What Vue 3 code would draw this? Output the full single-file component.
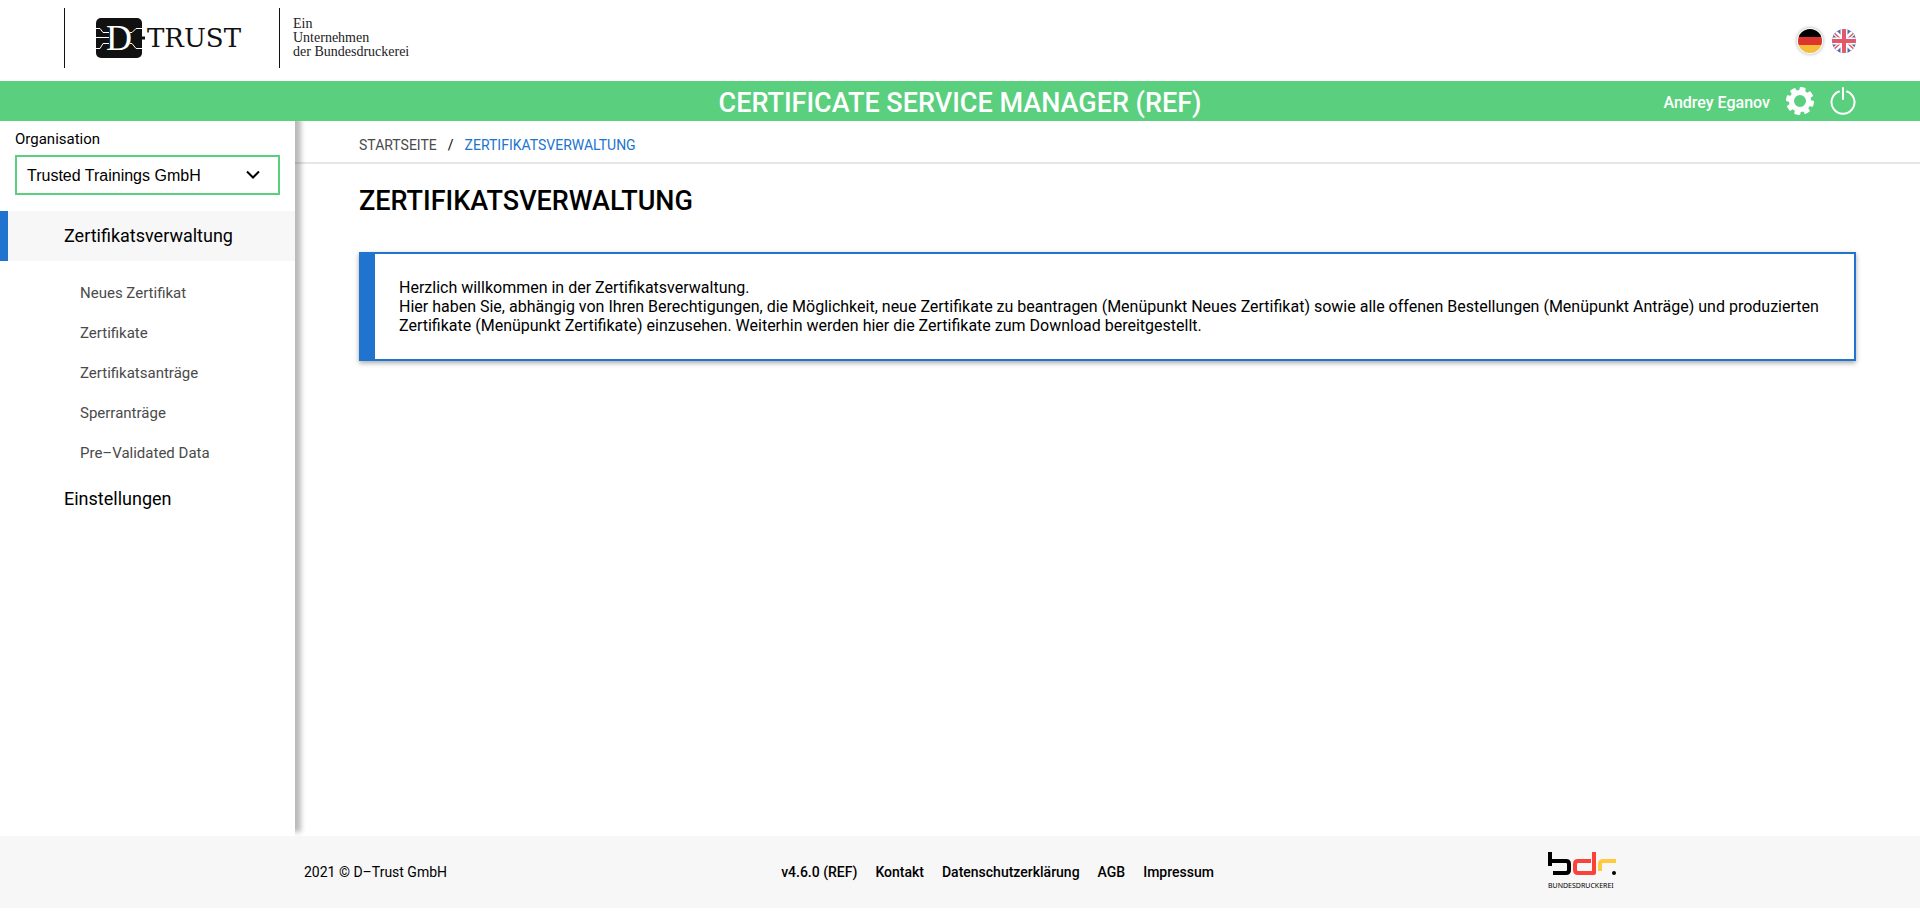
<script setup>
import { ref } from 'vue'

const organisation = ref('Trusted Trainings GmbH')
const subItems = ['Neues Zertifikat', 'Zertifikate', 'Zertifikatsanträge', 'Sperranträge', 'Pre–Validated Data']
const footerLinks = ['Kontakt', 'Datenschutzerklärung', 'AGB', 'Impressum']
const teeth = [0, 45, 90, 135, 180, 225, 270, 315]
</script>

<template>
  <div class="page">
    <header class="top">
      <a class="brand" href="#" aria-label="D-Trust">
        <svg class="brand-logo" width="152" height="42" viewBox="0 0 152 42" aria-hidden="true">
          <rect x="0" y="1" width="46" height="40" rx="5" fill="#111" />
          <g fill="none" stroke="#fff" stroke-width="1">
            <path d="M0 11.500H4L7 15.500H13M0 20.500H13M0 31.500H4L7 26.500H13" />
            <path d="M34 15.500H36L40 11.500H46M34 26.500H36L40 31.500H46" />
          </g>
          <path d="M36 21H49" stroke="#111" stroke-width="3" />
          <text x="10" y="33" class="logo-d">D</text>
          <text x="51" y="30" class="logo-word">TRUST</text>
        </svg>
        <span class="claim">Ein<br />Unternehmen<br />der Bundesdruckerei</span>
      </a>
      <div class="languages">
        <button class="flag current" type="button" aria-label="Deutsch">
          <svg width="24" height="24" viewBox="0 0 24 24">
            <clipPath id="round-de"><circle cx="12" cy="12" r="12" /></clipPath>
            <g clip-path="url(#round-de)">
              <path d="M0 0H24V8H0Z" fill="#000" />
              <path d="M0 8H24V16H0Z" fill="#dd352e" />
              <path d="M0 16H24V24H0Z" fill="#f5bd3a" />
            </g>
          </svg>
        </button>
        <button class="flag" type="button" aria-label="English">
          <svg width="24" height="24" viewBox="0 0 24 24">
            <clipPath id="round-uk"><circle cx="12" cy="12" r="12" /></clipPath>
            <g clip-path="url(#round-uk)">
              <path d="M0 0H24V24H0Z" fill="#5568ab" />
              <path d="M0 1L12 12L24 1M24 23L12 12L0 23" stroke="#fff" stroke-width="5" fill="none" />
              <path d="M0 2L12 13M24 2L12 13M24 22L12 11M0 22L12 11" stroke="#e25a6a" stroke-width="1.500" />
              <path d="M12 0V24M0 12H24" stroke="#fff" stroke-width="7" />
              <path d="M12 0V24M0 12H24" stroke="#e25a6a" stroke-width="4" />
            </g>
          </svg>
        </button>
      </div>
    </header>

    <div class="bar">
      <span class="bar-title">CERTIFICATE SERVICE MANAGER (REF)</span>
      <div class="account">
        <span class="user">Andrey Eganov</span>
        <button class="icon" type="button" aria-label="Einstellungen">
          <svg width="28" height="28" viewBox="0 0 28 28">
            <g fill="#fff">
              <rect v-for="a in teeth" :key="a" x="11" y="0" width="6" height="7" rx="1" :transform="`rotate(${a + 12} 14 14)`" />
            </g>
            <circle cx="14" cy="14" r="8.500" fill="none" stroke="#fff" stroke-width="5" />
          </svg>
        </button>
        <button class="icon" type="button" aria-label="Abmelden">
          <svg width="26" height="28" viewBox="0 0 26 28" fill="none" stroke="#fff" stroke-width="2" stroke-linecap="round">
            <path d="M9 4.500A11.500 11.500 0 1 0 17 4.500M13 1V12" />
          </svg>
        </button>
      </div>
    </div>

    <div class="body">
      <aside class="side">
        <div class="org">
          <label for="organisation">Organisation</label>
          <div class="select">
            <select id="organisation" v-model="organisation">
              <option>Trusted Trainings GmbH</option>
            </select>
            <svg class="chevron" width="14" height="10" viewBox="0 0 14 10" fill="none" stroke="#000" stroke-width="2">
              <path d="M1 1.500L7 7.500L13 1.500" />
            </svg>
          </div>
        </div>
        <nav class="menu">
          <a class="main-item active" href="#">Zertifikatsverwaltung</a>
          <div class="sub">
            <a v-for="item in subItems" :key="item" href="#">{{ item }}</a>
          </div>
          <a class="main-item" href="#">Einstellungen</a>
        </nav>
      </aside>

      <main class="content">
        <nav class="crumbs">
          <a href="#">STARTSEITE</a>
          <span>/</span>
          <a class="here" href="#">ZERTIFIKATSVERWALTUNG</a>
        </nav>
        <h1>ZERTIFIKATSVERWALTUNG</h1>
        <p class="info">
          Herzlich willkommen in der Zertifikatsverwaltung.<br />
          Hier haben Sie, abhängig von Ihren Berechtigungen, die Möglichkeit, neue Zertifikate zu beantragen (Menüpunkt Neues Zertifikat) sowie alle offenen Bestellungen (Menüpunkt Anträge) und produzierten Zertifikate (Menüpunkt Zertifikate) einzusehen. Weiterhin werden hier die Zertifikate zum Download bereitgestellt.
        </p>
      </main>
    </div>

    <footer class="foot">
      <span>2021 © D–Trust GmbH</span>
      <nav class="foot-links">
        <span>v4.6.0 (REF)</span>
        <a v-for="link in footerLinks" :key="link" href="#">{{ link }}</a>
      </nav>
      <svg class="bdr" width="68" height="40" viewBox="0 0 68 40" role="img" aria-label="Bundesdruckerei">
        <g fill="none" stroke-width="4" stroke-linejoin="round">
          <path d="M2 0V14M2 9H18Q21 9 21 12V18Q21 21 18 21H5" stroke="#000" />
          <path d="M46 0V21H30Q27 21 27 18V12Q27 9 30 9H43" stroke="#fa423a" />
          <path d="M52 19V12Q52 9 55 9H68" stroke="#ffcb3d" />
        </g>
        <circle cx="66" cy="21" r="2" fill="#000" />
        <text x="0" y="36" class="bdr-text">BUNDESDRUCKEREI</text>
      </svg>
    </footer>
  </div>
</template>

<style>
body {
  margin: 0;
  background: #fff;
}
</style>

<style scoped>
.page {
  display: flex;
  flex-direction: column;
  min-height: calc(100vh - 5px);
  font-family: Roboto, "Noto Sans", sans-serif;
  font-size: 16px;
  color: #000;
}
a {
  color: inherit;
  text-decoration: none;
}
button {
  display: flex;
  padding: 0;
  border: 0;
  background: none;
  cursor: pointer;
}
.top {
  display: flex;
  align-items: center;
  justify-content: space-between;
  height: 81px;
  padding: 0 64px;
  box-sizing: border-box;
}
.brand {
  display: flex;
  align-items: center;
  height: 60px;
  margin-bottom: 5px;
  border-left: 1px solid #111;
}
.brand-logo {
  margin: 0 31px;
}
.logo-d {
  font: 36px "Liberation Serif", serif;
  fill: #fff;
}
.logo-word {
  font: 26px "DejaVu Serif", serif;
  fill: #111;
}
.claim {
  display: flex;
  align-items: center;
  height: 60px;
  padding-left: 13px;
  border-left: 1px solid #111;
  font: 14px/14px "Liberation Serif", serif;
  color: #222;
}
.languages {
  display: flex;
  gap: 10px;
}
.flag {
  border-radius: 50%;
}
.current {
  box-shadow: 0 0 0 1px #fff, 0 0 3px 2px #ccc;
}
.bar {
  position: relative;
  z-index: 2;
  display: grid;
  grid-template-columns: 1fr auto 1fr;
  align-items: center;
  height: 40px;
  padding: 0 64px;
  background: #5acf7e;
  color: #fff;
}
.bar-title {
  grid-column: 2;
  padding-top: 3px;
  font-size: 27px;
  font-weight: 500;
}
.account {
  display: flex;
  align-items: center;
  justify-content: flex-end;
  gap: 16px;
}
.user {
  padding-top: 2px;
  font-weight: 500;
}
.body {
  display: flex;
  flex: 1;
}
.side {
  position: relative;
  z-index: 1;
  flex: 0 0 295px;
  background: #fff;
  box-shadow: 6px -4px 5px rgba(0, 0, 0, 0.27);
}
.org {
  padding: 8px 15px 16px;
}
.org label {
  display: block;
  margin-bottom: 6px;
  font-size: 15px;
  line-height: 20px;
}
.select {
  position: relative;
}
.select select {
  display: block;
  width: 100%;
  height: 40px;
  padding: 0 10px;
  border: 2px solid #5acf7e;
  border-radius: 0;
  background: #fff;
  appearance: none;
  font: 16px "Liberation Sans", sans-serif;
  color: #000;
}
.chevron {
  position: absolute;
  top: 15px;
  right: 20px;
  pointer-events: none;
}
.main-item {
  display: block;
  padding-left: 56px;
  border-left: 8px solid transparent;
  font-size: 18px;
  line-height: 50px;
}
.active {
  border-color: #2074cf;
  background: #f7f7f7;
}
.sub {
  display: flex;
  flex-direction: column;
  padding: 12px 0 1px 80px;
  font-size: 15px;
  line-height: 40px;
  color: #4a4a4a;
}
.content {
  flex: 1;
  min-width: 0;
}
.crumbs {
  display: flex;
  gap: 11px;
  padding: 7px 64px 0;
  border-bottom: 2px solid #e6e6e6;
  font-size: 14px;
  line-height: 34px;
}
.crumbs a {
  color: #4a4a4a;
}
.crumbs .here {
  color: #2074cf;
}
h1 {
  margin: 20px 64px 34px;
  font-size: 27px;
  font-weight: 500;
  line-height: 34px;
}
.info {
  margin: 0 64px;
  padding: 24px;
  border: 2px solid #2074cf;
  border-left-width: 16px;
  box-shadow: 0 2px 5px rgba(0, 0, 0, 0.35);
  line-height: 19px;
}
.foot {
  position: relative;
  z-index: 2;
  display: flex;
  align-items: center;
  justify-content: space-between;
  height: 72px;
  padding: 0 304px;
  background: #f7f7f7;
  font-size: 14px;
}
.foot-links {
  display: flex;
  gap: 18px;
  font-weight: 500;
}
.bdr-text {
  font: 7px "Noto Sans", sans-serif;
}
</style>
